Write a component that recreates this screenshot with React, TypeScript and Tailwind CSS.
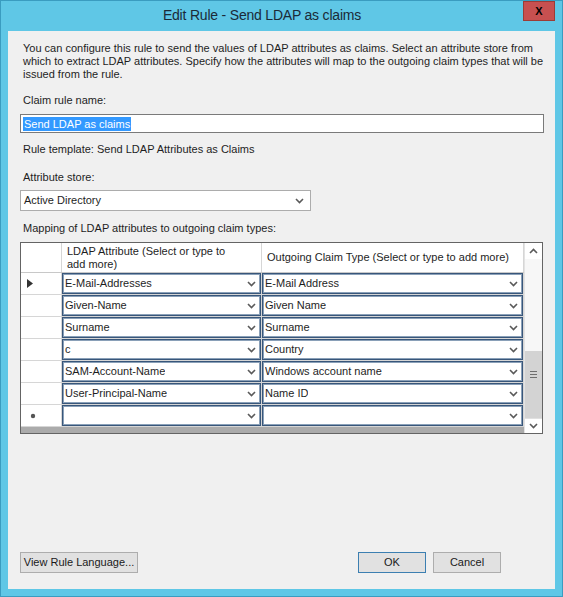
import React from "react";

const attrRows = [
  { ldap: "E-Mail-Addresses", claim: "E-Mail Address" },
  { ldap: "Given-Name", claim: "Given Name" },
  { ldap: "Surname", claim: "Surname" },
  { ldap: "c", claim: "Country" },
  { ldap: "SAM-Account-Name", claim: "Windows account name" },
  { ldap: "User-Principal-Name", claim: "Name ID" },
];

function Chevron({ up = false }: { up?: boolean }) {
  return (
    <svg width="9" height="6" viewBox="0 0 9 6" className="shrink-0">
      <polyline
        points={up ? "1,5 4.5,1.5 8,5" : "1,1 4.5,4.5 8,1"}
        fill="none"
        stroke="#5a5a5a"
        strokeWidth="1.6"
      />
    </svg>
  );
}

function ComboCell({ value, width }: { value: string; width: string }) {
  return (
    <div className={`${width} h-[21px] shrink-0 border-r border-[#d6d6d6]`}>
      <div className="flex h-full items-center justify-between border border-[#38567a] bg-white pl-[2px] pr-[4px] shadow-[inset_0_0_0_1px_#8aa0b8]">
        <span className="truncate">{value}</span>
        <Chevron />
      </div>
    </div>
  );
}

function Button({ label, width, primary = false }: { label: string; width: string; primary?: boolean }) {
  return (
    <button
      type="button"
      className={`${width} h-[21px] border bg-[#e1e1e1] text-center leading-[19px] text-[#1a1a1a] ${
        primary ? "border-[#3c7fb1]" : "border-[#adadad]"
      }`}
    >
      {label}
    </button>
  );
}

export default function App() {
  return (
    <div className="flex h-[597px] w-[563px] flex-col border border-[#3a9cc0] bg-[#5fc7e6] font-['Liberation_Sans',Arial,sans-serif] text-[11px] text-[#1e1e1e]">
      {/* title bar */}
      <div className="flex h-[30px] shrink-0">
        <div className="flex-1 pt-[6px] text-center text-[14px] leading-[16px] tracking-[-0.2px] text-[#1b2a38]">
          Edit Rule - Send LDAP as claims
        </div>
        <div className="mr-[7px] flex h-[20px] w-[32px] items-center justify-center border border-[#9c3c36] bg-[#c75050] text-[11px] font-bold leading-none text-black">
          X
        </div>
      </div>

      {/* client area */}
      <div className="mx-[7px] flex h-[558px] flex-col bg-[#f0f0f0] pl-[12px] pt-[11px] leading-[13px]">
        <p className="whitespace-nowrap pl-[3px]">
          You can configure this rule to send the values of LDAP attributes as claims. Select an attribute store from
          <br />
          which to extract LDAP attributes. Specify how the attributes will map to the outgoing claim types that will be
          <br />
          issued from the rule.
        </p>

        <div className="mt-[13px] pl-[3px]">Claim rule name:</div>
        <div className="mt-[7px] flex h-[19px] w-[524px] items-center border border-[#7a7a7a] bg-white px-[2px]">
          <span className="bg-[#3399ff] px-[1px] leading-[14px] text-white">Send LDAP as claims</span>
        </div>

        <div className="mt-[10px] pl-[3px]">Rule template: Send LDAP Attributes as Claims</div>

        <div className="mt-[15px] pl-[3px]">Attribute store:</div>
        <div className="mt-[6px] flex h-[21px] w-[291px] items-center justify-between border border-[#acacac] bg-white pl-[3px] pr-[6px]">
          <span>Active Directory</span>
          <Chevron />
        </div>

        <div className="mt-[11px] pl-[3px]">Mapping of LDAP attributes to outgoing claim types:</div>

        {/* data grid */}
        <div className="mt-[7px] flex h-[192px] w-[523px] border border-[#646464] bg-[#ababab]">
          <div className="flex w-[503px] flex-col">
            <div className="flex h-[30px] shrink-0 border-b border-[#c8c8c8] bg-white">
              <div className="w-[41px] shrink-0 border-r border-[#d6d6d6]" />
              <div className="w-[200px] shrink-0 border-r border-[#d6d6d6] pl-[5px] pt-[2px] leading-[13px]">
                LDAP Attribute (Select or type to
                <br />
                add more)
              </div>
              <div className="flex flex-1 items-center border-r border-[#d6d6d6] pl-[5px]">
                Outgoing Claim Type (Select or type to add more)
              </div>
            </div>
            {attrRows.map((row, i) => (
              <div key={row.ldap} className="flex h-[22px] shrink-0 border-b border-[#d6d6d6] bg-white">
                <div className="flex w-[41px] shrink-0 items-center border-r border-[#d6d6d6] pl-[6px]">
                  {i === 0 && (
                    <svg width="6" height="9" viewBox="0 0 6 9">
                      <polygon points="0,0 6,4.5 0,9" fill="#333" />
                    </svg>
                  )}
                </div>
                <ComboCell value={row.ldap} width="w-[200px]" />
                <ComboCell value={row.claim} width="w-[262px]" />
              </div>
            ))}
            <div className="flex h-[22px] shrink-0 border-b border-[#d6d6d6] bg-white">
              <div className="flex w-[41px] shrink-0 items-center border-r border-[#d6d6d6] pl-[9px]">
                <svg width="6" height="6" viewBox="0 0 6 6">
                  <circle cx="3" cy="3" r="2.2" fill="#555" />
                </svg>
              </div>
              <ComboCell value="" width="w-[200px]" />
              <ComboCell value="" width="w-[262px]" />
            </div>
          </div>

          {/* scrollbar */}
          <div className="flex w-[18px] flex-col border-l border-[#e3e3e3] bg-[#f7f7f7]">
            <div className="flex h-[16px] items-center justify-center bg-white">
              <Chevron up />
            </div>
            <div className="flex flex-1 flex-col justify-end">
              <div className="flex h-[67px] flex-col items-center bg-[#d3d3d3] pt-[20px]">
                <div className="flex w-[7px] flex-col gap-[2px]">
                  <div className="h-[1px] bg-[#6e6e6e]" />
                  <div className="h-[1px] bg-[#6e6e6e]" />
                  <div className="h-[1px] bg-[#6e6e6e]" />
                </div>
              </div>
            </div>
            <div className="flex h-[15px] items-center justify-center border-t border-[#e0e0e0] bg-white">
              <Chevron />
            </div>
          </div>
        </div>

        {/* buttons */}
        <div className="mt-auto mb-[16px] flex items-center">
          <Button label="View Rule Language..." width="w-[118px]" />
          <div className="flex-1" />
          <Button label="OK" width="w-[68px]" primary />
          <div className="w-[7px]" />
          <Button label="Cancel" width="w-[68px]" />
          <div className="w-[54px]" />
        </div>
      </div>
    </div>
  );
}
